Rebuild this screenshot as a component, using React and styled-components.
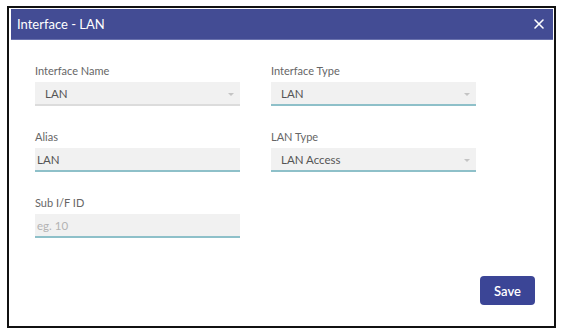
import React from "react";
import styled, { createGlobalStyle } from "styled-components";

const Global = createGlobalStyle`
  html, body { margin: 0; padding: 0; background: #fff; }
  body { font-family: Lato, "Open Sans", sans-serif; }
  #root { width: 566px; height: 331px; padding: 6px 0 0 7px; box-sizing: border-box; }
`;

const Frame = styled.div`
  width: 549px;
  height: 322px;
  box-sizing: border-box;
  border: 2px solid #111;
  padding: 1px 1px 1px 2px;
  display: flex;
  flex-direction: column;
`;

const Header = styled.div`
  height: 31px;
  flex: none;
  background: #434c94;
  border-bottom: 1px solid #6a72ad;
  box-sizing: border-box;
  display: flex;
  align-items: center;
  justify-content: space-between;
  padding: 0 8px 0 6px;
`;

const Title = styled.div`
  color: #fff;
  font-size: 13px;
`;

const Close = styled.button`
  border: none;
  background: none;
  padding: 0;
  width: 12px;
  height: 12px;
  display: flex;
  cursor: pointer;
`;

const Body = styled.div`
  flex: 1;
  display: flex;
  flex-direction: column;
  padding: 23px 18px 20px 24px;
`;

const Form = styled.div`
  display: grid;
  grid-template-columns: 205px 205px;
  column-gap: 31px;
  row-gap: 23px;
`;

const Field = styled.div`
  display: flex;
  flex-direction: column;
`;

const Label = styled.div`
  height: 16px;
  line-height: 16px;
  font-size: 11px;
  color: #666;
  margin-bottom: 3px;
`;

const Control = styled.div`
  position: relative;
  height: 24px;
  box-sizing: border-box;
  background: #f1f1f1;
  border-bottom: 2px solid ${(p) => (p.$muted ? "#dcdcdc" : "#8ec0c9")};
  display: flex;
  align-items: center;
  padding-left: ${(p) => (p.$select ? "10px" : "2px")};
  font-size: 11.5px;
  color: ${(p) => (p.$placeholder ? "#b3b3b3" : "#555")};
`;

const Caret = styled.span`
  position: absolute;
  right: 6px;
  top: 11px;
  width: 0;
  height: 0;
  border-left: 3.5px solid transparent;
  border-right: 3.5px solid transparent;
  border-top: 3.5px solid #c4c4c4;
`;

const Footer = styled.div`
  margin-top: auto;
  display: flex;
  justify-content: flex-end;
`;

const SaveButton = styled.button`
  width: 55px;
  height: 29px;
  border: none;
  border-radius: 4px;
  background: #3b4596;
  color: #fff;
  font-family: Lato, sans-serif;
  font-size: 13px;
  font-weight: 600;
  cursor: pointer;
`;

const fields = [
  { label: "Interface Name", value: "LAN", select: true, muted: true },
  { label: "Interface Type", value: "LAN", select: true },
  { label: "Alias", value: "LAN" },
  { label: "LAN Type", value: "LAN Access", select: true },
  { label: "Sub I/F ID", value: "eg. 10", placeholder: true },
];

export default function App() {
  return (
    <>
      <Global />
      <Frame>
        <Header>
          <Title>Interface - LAN</Title>
          <Close aria-label="close">
            <svg width="12" height="12" viewBox="0 0 12 12">
              <path d="M2 2L10 10M10 2L2 10" stroke="#fff" strokeWidth="1.6" strokeLinecap="round" />
            </svg>
          </Close>
        </Header>
        <Body>
          <Form>
            {fields.map((f) => (
              <Field key={f.label}>
                <Label>{f.label}</Label>
                <Control $select={f.select} $muted={f.muted} $placeholder={f.placeholder}>
                  {f.value}
                  {f.select && <Caret />}
                </Control>
              </Field>
            ))}
          </Form>
          <Footer>
            <SaveButton>Save</SaveButton>
          </Footer>
        </Body>
      </Frame>
    </>
  );
}
